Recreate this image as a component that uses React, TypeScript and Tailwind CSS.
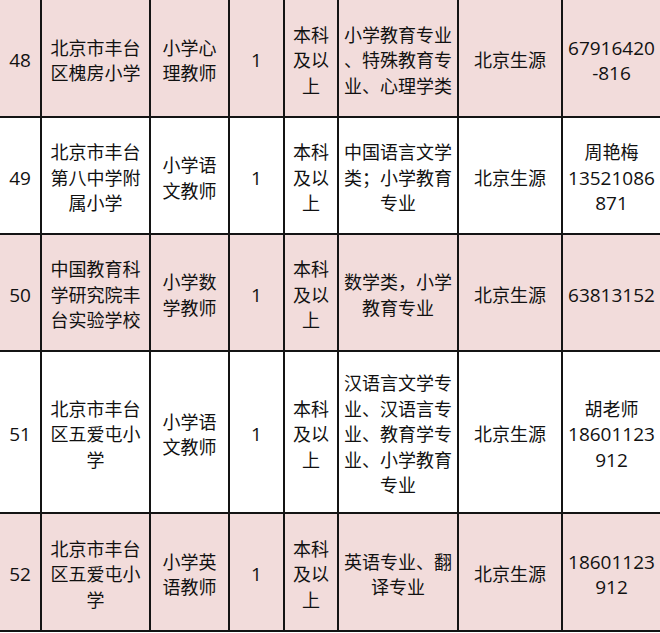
type Row = {
  no: string;
  school: string[];
  post: string[];
  count: string;
  edu: string[];
  major: string[];
  origin: string;
  contact: string[];
  pink: boolean;
};

const rows: Row[] = [
  {
    no: "48",
    school: ["北京市丰台", "区槐房小学"],
    post: ["小学心", "理教师"],
    count: "1",
    edu: ["本科", "及以", "上"],
    major: ["小学教育专业", "、特殊教育专", "业、心理学类"],
    origin: "北京生源",
    contact: ["67916420", "-816"],
    pink: true,
  },
  {
    no: "49",
    school: ["北京市丰台", "第八中学附", "属小学"],
    post: ["小学语", "文教师"],
    count: "1",
    edu: ["本科", "及以", "上"],
    major: ["中国语言文学", "类；小学教育", "专业"],
    origin: "北京生源",
    contact: ["周艳梅", "13521086", "871"],
    pink: false,
  },
  {
    no: "50",
    school: ["中国教育科", "学研究院丰", "台实验学校"],
    post: ["小学数", "学教师"],
    count: "1",
    edu: ["本科", "及以", "上"],
    major: ["数学类，小学", "教育专业"],
    origin: "北京生源",
    contact: ["63813152"],
    pink: true,
  },
  {
    no: "51",
    school: ["北京市丰台", "区五爱屯小", "学"],
    post: ["小学语", "文教师"],
    count: "1",
    edu: ["本科", "及以", "上"],
    major: ["汉语言文学专", "业、汉语言专", "业、教育学专", "业、小学教育", "专业"],
    origin: "北京生源",
    contact: ["胡老师", "18601123", "912"],
    pink: false,
  },
  {
    no: "52",
    school: ["北京市丰台", "区五爱屯小", "学"],
    post: ["小学英", "语教师"],
    count: "1",
    edu: ["本科", "及以", "上"],
    major: ["英语专业、翻", "译专业"],
    origin: "北京生源",
    contact: ["18601123", "912"],
    pink: true,
  },
];

function Cell({ lines, pink }: { lines: string[]; pink: boolean }) {
  return (
    <div
      className={`flex flex-col items-center justify-center pt-[6px] text-center leading-[25.5px] ${
        pink ? "bg-[#f2dcdb]" : "bg-white"
      }`}
    >
      {lines.map((l, i) => (
        <div
          key={i}
          className={`whitespace-pre ${/^[\d-]+$/.test(l) ? "text-[19px]" : "text-[18px]"}`}
        >
          {l}
        </div>
      ))}
    </div>
  );
}

export default function App() {
  return (
    <div className="w-[660px] h-[633px] bg-white">
      <div
        className="grid grid-cols-[40px_107px_77px_53px_52px_118px_102px_97px] grid-rows-[116px_115px_115px_160px_116px] gap-[2px] pb-[2px] bg-[#141414] text-[#111]"
        style={{ fontFamily: '"Open Sans", "Noto Sans CJK SC", sans-serif' }}
      >
        {rows.map((r) => [
          <Cell key={r.no + "a"} lines={[r.no]} pink={r.pink} />,
          <Cell key={r.no + "b"} lines={r.school} pink={r.pink} />,
          <Cell key={r.no + "c"} lines={r.post} pink={r.pink} />,
          <Cell key={r.no + "d"} lines={[r.count]} pink={r.pink} />,
          <Cell key={r.no + "e"} lines={r.edu} pink={r.pink} />,
          <Cell key={r.no + "f"} lines={r.major} pink={r.pink} />,
          <Cell key={r.no + "g"} lines={[r.origin]} pink={r.pink} />,
          <Cell key={r.no + "h"} lines={r.contact} pink={r.pink} />,
        ])}
      </div>
    </div>
  );
}
